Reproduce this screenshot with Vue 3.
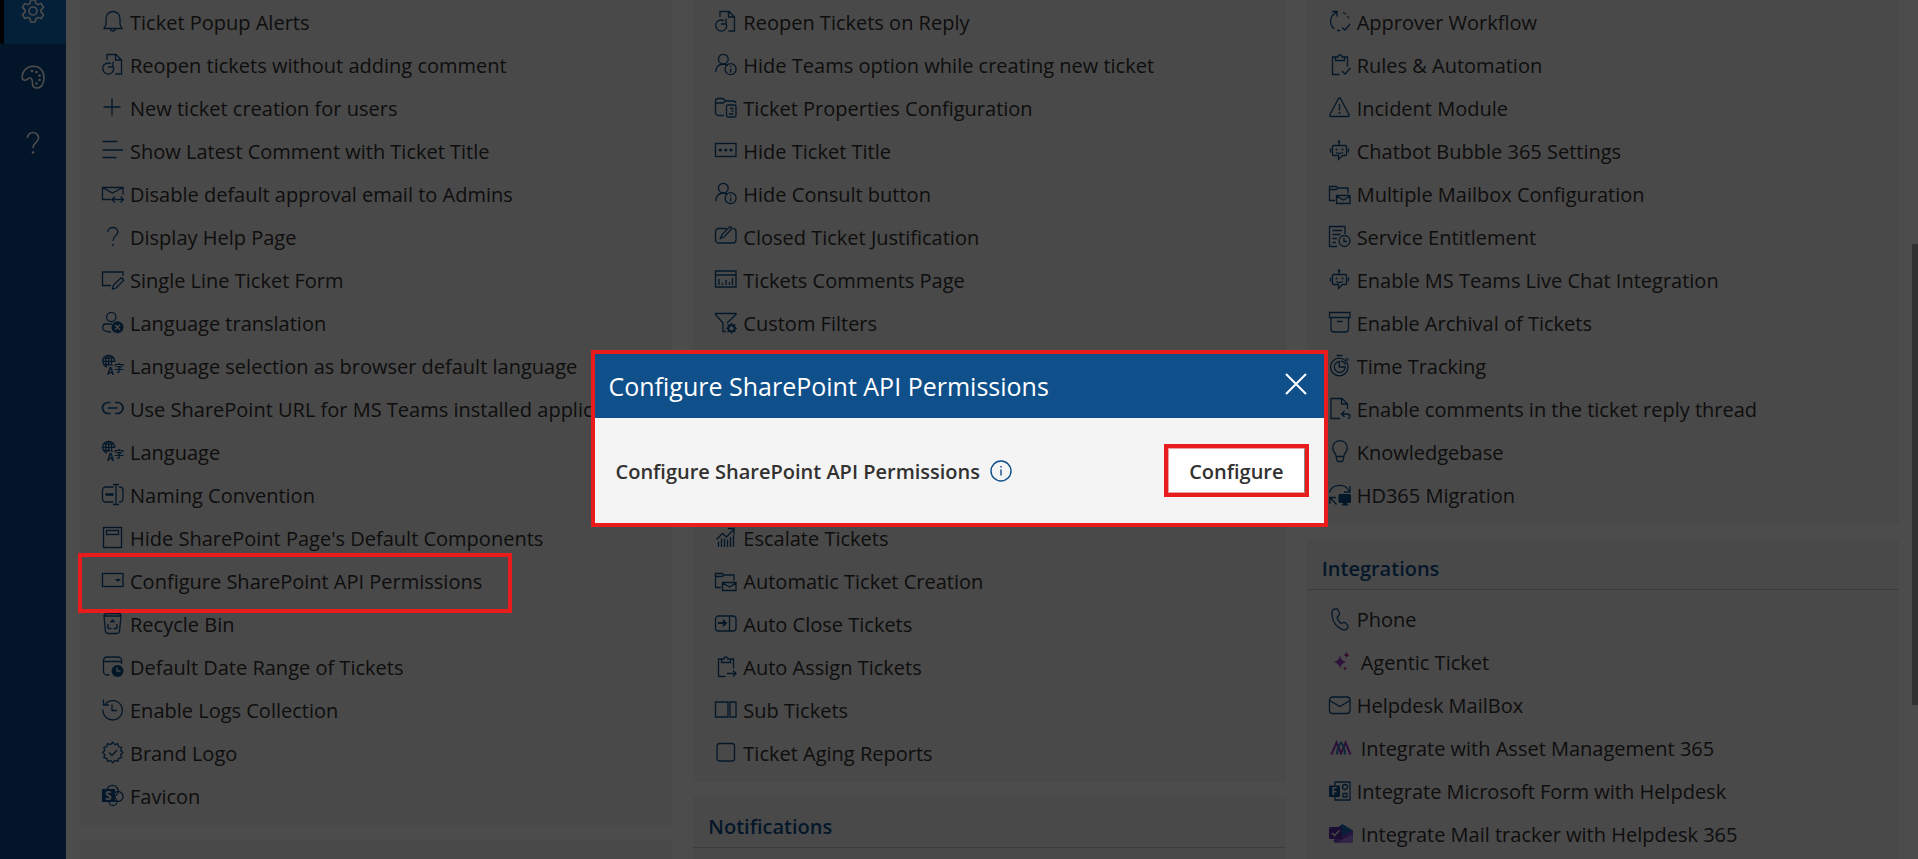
<script setup>
const scallop = (cx, cy, outer, inner, teeth) => {
  const points = []
  for (let i = 0; i < teeth * 2; i++) {
    const r = i % 2 ? inner : outer
    const a = (Math.PI * i) / teeth - Math.PI / 2
    points.push(`${(cx + r * Math.cos(a)).toFixed(1)} ${(cy + r * Math.sin(a)).toFixed(1)}`)
  }
  return `M${points.join('L')}Z`
}

const solid = 'fill="currentColor" stroke="none"'
const knock = 'fill="none" stroke="#f4f4f4"'
const globe = `<circle cx="6.7" cy="7.3" r="6"/><path d="M6.7 1.3v12M.7 7.3h12M2 4.2h9.4M2 10.4h6"/><ellipse cx="6.7" cy="7.3" rx="3" ry="6"/><path fill="#f4f4f4" stroke="none" d="M5 12h6V8h11v14H5z"/><text x="5" y="21" font-size="10" font-weight="700" ${solid}>A</text><text x="12" y="18" font-size="10" font-weight="700" ${solid}>字</text>`
const clipboard = '<path d="M10.500 21.500H3.500V4H7M15 4h3.500v9.500M6.500 4v3.500h9V4H13a2 2 0 0 0-4 0z"/>'
const bot = `<path d="M4.500 6.500h12q1 0 1 1v8q0 1-1 1h-3l-4 4v-4h-5q-1 0-1-1v-8q0-1 1-1zM10 6.500V3M1.500 9.500v4M19.500 9.500v4M7 13.500q3.500 2 7 0"/><circle cx="10" cy="2.500" r="1.300" ${solid}/><circle cx="7.500" cy="10.500" r="1" ${solid}/><circle cx="13.500" cy="10.500" r="1" ${solid}/>`

const icons = {
  bell: '<path d="M2 18.5h18l-2-4V8.500a7 7 0 0 0-14 0v6zM8.500 18.500a2.500 2.500 0 0 0 5 0"/>',
  reopen: '<path d="M5 7V1.500h9l5.500 5.500v14h-6M13.500 1.500V7h6M11.500 14a5.500 5.500 0 1 1-2.500-3.200M11 8.500V14H6"/>',
  plus: '<path d="M10 2.500v17M1.500 11h17"/>',
  lines: '<path d="M.5 2.500h15M.5 11h20.500M.5 18.500h14"/>',
  mailArrows: '<path d="M9 17.500H.5v-12h20.500v7M.5 5.500l10 5.500 10.500-5.500M10.500 17.500h10.500M13 14.500l-3 3 3 3M18.500 14.500l3 3-3 3"/>',
  question: `<path d="M5.800 7a5 4.500 0 0 1 10 0c0 3.500-5 4.500-5 9"/><circle cx="10.800" cy="20" r="1" ${solid}/>`,
  formEdit: '<path d="M9 17.500H.5V4h20.500v4M10.500 21l1-4 7.500-7q2 0 2.500 2.500l-7.500 7.500z"/>',
  personX: `<circle cx="9.300" cy="6" r="4.700"/><path d="M9 21C4 21 .7 19.500.7 16.500q0-3.500 3-3.500H10"/><circle cx="15.500" cy="16.300" r="6" ${solid}/><path ${knock} d="M13 13.800l5 5M18 13.800l-5 5"/>`,
  language: globe,
  link: '<path stroke-width="1.700" d="M8.500 5.500H6a5.500 5.500 0 0 0 0 11h2.500M13 5.500h2.500a5.500 5.500 0 0 1 0 11H13M6 11h9.500"/>',
  naming: '<path d="M11.500 4h-8a3 3 0 0 0-3 3v9a3 3 0 0 0 3 3h8M14 1.500v20M11 1.500h6M11 21.500h6M17 4q4 0 4 3v9q0 3-4 3"/><path stroke-width="2.600" d="M3.500 11.500h8"/>',
  page: '<rect x="1.500" y="1.500" width="18" height="20"/><rect x="4.500" y="4.500" width="12" height="4"/>',
  dropdown: `<rect x=".5" y="4.500" width="20.500" height="13"/><path ${solid} d="M13 10h6l-3 3z"/>`,
  recycle: '<path d="M2 4q0-2.500 2.500-2.500h12Q19 1.500 19 4l-1.500 15.500q-.5 2-2.500 2H6q-2 0-2.500-2L2 4h17"/><path d="M8.500 10.500l2-2.500 2 2.500M6.500 12l-1 3 1.500 1.500h2.500M14.500 12l1 3-1.500 1.500h-2.500"/>',
  dateRange: `<path d="M7.500 20H5a3.500 3.500 0 0 1-3.500-3.500v-11A3.500 3.500 0 0 1 5 2h11a3.500 3.500 0 0 1 3.500 3.500V9M1.500 6.500h18"/><circle cx="15.500" cy="16" r="6" ${solid}/><path ${knock} d="M15 12.500V16h3.500"/>`,
  history: '<path d="M3 6.300a9.700 9.700 0 1 1-2 5.200M1.500 1.500v5.500H7M10 6.500v6h5"/>',
  badge: `<path stroke-linejoin="round" d="${scallop(10.7, 11.5, 10.3, 8.2, 12)}"/><path d="M7 11.500l3 3 5-5.500"/>`,
  sharepoint: `<circle cx="10.500" cy="7" r="5.700"/><circle cx="16" cy="12.500" r="5"/><circle cx="11" cy="17.500" r="4"/><rect x="0" y="5" width="13" height="13" ${solid}/><text x="3" y="16" font-size="12" font-weight="700" fill="#f4f4f4" stroke="none">S</text>`,
  personInfo: `<circle cx="8.300" cy="6.200" r="4.900"/><path d="M.6 19q.4-7.500 7.500-8 3 .2 4.500 1.500"/><circle cx="15.600" cy="16.200" r="5.500"/><path d="M15.600 15.500v4M15.600 12.800v1.300"/>`,
  folderDoc: '<path d="M9 19.500H3.500a3 3 0 0 1-3-3V5q0-2.500 2.500-2.500h5L10.500 5H18q2.500 0 3 2M.5 7H8l2.500-2"/><rect x="11.500" y="9" width="9.500" height="12" rx="1.500"/><path d="M15 12.500h3.500M16.500 15h2M14 18h4.500"/>',
  dots: `<rect x=".5" y="4.500" width="20.500" height="13"/><g ${solid}><circle cx="5.300" cy="11" r="1.600"/><circle cx="10.700" cy="11" r="1.600"/><circle cx="16" cy="11" r="1.600"/></g>`,
  cardEdit: '<path d="M11.500 3.500h-8a3 3 0 0 0-3 3V15a3 3 0 0 0 3 3H18a3 3 0 0 0 3-3V6.500a3 3 0 0 0-2.500-3M5.500 13.500l1.500-4L14.500 2q2-.8 2.500 1.500l-7.500 8z"/>',
  chartPage: '<path d="M.5 3h20.500v16H.5zM.5 7h20.500M4 11v6M7.500 15v2M11 12v5M14.500 14v3M17.500 10v7"/>',
  filterGear: `<path d="M12 12l9-8.500v-1H.5v1L8 12v8.500h3"/><path stroke-width="1.800" d="${scallop(16.5, 17.3, 4.2, 2.8, 8)}"/>`,
  escalate: '<path d="M1.500 13.500l6-6 4 3.500 7.500-8M13 2.500h6v6M3.500 15.500v5.500M6.500 12.500V21M9.500 12.500V21M12.500 13.500V21M15.500 11V21M18.500 9v12"/>',
  folderMail: '<path d="M6 18.500H.5v-14h7L8.500 6h10.500v5.500M.5 7.500h7L9 6"/><path d="M7.500 13.500H21v8H7.500zM7.500 14l7 4L21 14"/>',
  autoClose: '<rect x=".5" y="4" width="20.500" height="15" rx="3"/><path d="M14.500 4v15"/><path stroke-width="1.800" d="M3 11h8M8 8l3 3-3 3"/>',
  assign: `${clipboard}<path d="M12 18.500h9M18 15.500l3 3-3 3"/>`,
  subTickets: '<path d="M.5 4h12.500v15H.5zM15 4h6v15h-6z"/>',
  square: '<rect x="2" y="2.500" width="17.500" height="17.500" rx="2.500"/>',
  workflow: '<path d="M5.500 19A9.500 9.500 0 0 1 3 6L7.500 2M3 1.500h5v5M14 2.500l3 1.500M18.500 6l1.500 2.500M8 20.500h3M13 17.500l3 2.500 5-6"/>',
  rules: `${clipboard}<path d="M13 18l3 3 5.500-6"/>`,
  incident: `<path stroke-linejoin="round" d="M9.500 2.500q1-1.500 2 0L20 18.500q.5 2-1 2H2q-1.500 0-1-2zM10.500 8v6.500"/><circle cx="10.500" cy="17" r="1" ${solid}/>`,
  bot,
  entitlement: '<path d="M8 21.500H.5v-20H16V9M3.500 5.500h9.500M3.500 9.500h8M3.500 13.500H8M3.500 17.500H7"/><circle cx="15.500" cy="16" r="5.500"/><path d="M15 13v3.500h3"/>',
  archive: '<path d="M.5 1.500h20.500v5H.5zM2 6.500V18a3 3 0 0 0 3 3h11.500a3 3 0 0 0 3-3V6.500M8 10.500h5.500"/>',
  stopwatch: '<circle cx="10.300" cy="13" r="8.800"/><path d="M10.300 7.500a5.500 5.500 0 1 0 6 5.500h-6zM12 7q4 1 4.500 4M7.500 1.500h6M17 4l2.500 2.500"/>',
  pageReply: '<path d="M11 21.500H2v-20h11l5.500 5.500v5M12.500 1.500V7h6M15.500 14l-3 3 3 3M12.500 17h6q2.500.5 2.500 2.500 0 1.500-2 2"/>',
  bulb: '<path d="M7 16q0-1.500-2-4a7.300 7.300 0 1 1 12 0q-2 2.500-2 4l-1 4.500q-.3 1-1.500 1h-3q-1.200 0-1.500-1zM7 16.500h8"/>',
  migration: `<path d="M.5 9.500a10.500 9.500 0 0 1 20-1M21 3v6h-6M.8 21v-6.500H7M1 14.500l6.500 7"/><path ${solid} d="M11 11h9.500q1.500 0 1.500 1.500v6q0 1.500-1.500 1.500H18v1.500h1.500v1h-7v-1H14V20h-3q-1.500 0-1.500-1.500v-6Q9.500 11 11 11z"/>`,
  phone: '<path stroke-linejoin="round" d="M3 5q.3-3 3.500-3.200 2-.3 2.700 1.500l1.300 3q.3 1.500-.8 2.500L8 10.500q1 3.500 4 6l2.500-1q1.500-.3 2.300.7l2 2.500q.8 1.500-.5 2.700-2.300 2.200-5.500 1Q4 18 3 8.500z"/>',
  mail: '<rect x=".5" y="4" width="20.500" height="16.500" rx="3"/><path d="M.5 7.500l10.300 6L21 7.500"/>',
  forms: `<path d="M6 6.500V3h15v18H6v-3.500"/><circle cx="16" cy="8" r="2.500"/><path d="M14 14.500h4v3.500h-4z"/><rect x="0" y="6.500" width="11" height="11.500" rx="1" ${solid}/><text x="2.500" y="16" font-size="10" font-weight="700" fill="#f4f4f4" stroke="none">F</text>`,
  sparkle: '<g stroke="none"><path fill="#9b3fc8" d="M11 5.500q1 5.500 6.500 6.500-5.500 1-6.500 6.500-1-5.500-6.500-6.500 5.500-1 6.500-6.500z"/><path fill="#b5229b" d="M17.500 2q.5 2.500 3 3-2.500.5-3 3-.5-2.500-3-3 2.500-.5 3-3zM16 16.500q.3 1.700 2 2-1.700.3-2 2-.3-1.700-2-2 1.700-.3 2-2z"/></g>',
  asset: '<g stroke-width="2"><path stroke="#a02fc4" d="M2.500 18.500l5-12 5 12M11.500 18.500l5-12 5 12"/><path stroke="#2b7fc4" d="M8 18.500q0-7 4-12 4 5 4 12"/></g>',
  tracker: '<g stroke="none"><path fill="#1c6fc0" d="M4 8.500L13.500 2 24 8.500v6H4z"/><path fill="#8145d8" d="M24 8.500V18q0 3-3 3H7.500q-3 0-3-3z"/><path fill="#a07ce8" d="M8 20.500L24 12v6q0 3-3 3H8z"/><rect x="0" y="5" width="13" height="12" rx="1.500" fill="#5b2fa8"/></g><path stroke="#ffffff" d="M3 11l2.500 2.500 5-5"/>',
}

const columns = [
  [
    {
      groups: [[
        ['bell', 'Ticket Popup Alerts'],
        ['reopen', 'Reopen tickets without adding comment'],
        ['plus', 'New ticket creation for users'],
        ['lines', 'Show Latest Comment with Ticket Title'],
        ['mailArrows', 'Disable default approval email to Admins'],
        ['question', 'Display Help Page'],
        ['formEdit', 'Single Line Ticket Form'],
        ['personX', 'Language translation'],
        ['language', 'Language selection as browser default language'],
        ['link', 'Use SharePoint URL for MS Teams installed application'],
        ['language', 'Language'],
        ['naming', 'Naming Convention'],
        ['page', "Hide SharePoint Page's Default Components"],
        ['dropdown', 'Configure SharePoint API Permissions', 'marked'],
        ['recycle', 'Recycle Bin'],
        ['dateRange', 'Default Date Range of Tickets'],
        ['history', 'Enable Logs Collection'],
        ['badge', 'Brand Logo'],
        ['sharepoint', 'Favicon'],
      ]],
    },
    { groups: [] },
  ],
  [
    {
      groups: [
        [
          ['reopen', 'Reopen Tickets on Reply'],
          ['personInfo', 'Hide Teams option while creating new ticket'],
          ['folderDoc', 'Ticket Properties Configuration'],
          ['dots', 'Hide Ticket Title'],
          ['personInfo', 'Hide Consult button'],
          ['cardEdit', 'Closed Ticket Justification'],
          ['chartPage', 'Tickets Comments Page'],
          ['filterGear', 'Custom Filters'],
        ],
        [
          ['escalate', 'Escalate Tickets'],
          ['folderMail', 'Automatic Ticket Creation'],
          ['autoClose', 'Auto Close Tickets'],
          ['assign', 'Auto Assign Tickets'],
          ['subTickets', 'Sub Tickets'],
          ['square', 'Ticket Aging Reports'],
        ],
      ],
    },
    { title: 'Notifications', groups: [] },
  ],
  [
    {
      groups: [[
        ['workflow', 'Approver Workflow'],
        ['rules', 'Rules & Automation'],
        ['incident', 'Incident Module'],
        ['bot', 'Chatbot Bubble 365 Settings'],
        ['folderMail', 'Multiple Mailbox Configuration'],
        ['entitlement', 'Service Entitlement'],
        ['bot', 'Enable MS Teams Live Chat Integration'],
        ['archive', 'Enable Archival of Tickets'],
        ['stopwatch', 'Time Tracking'],
        ['pageReply', 'Enable comments in the ticket reply thread'],
        ['bulb', 'Knowledgebase'],
        ['migration', 'HD365 Migration'],
      ]],
    },
    {
      title: 'Integrations',
      groups: [[
        ['phone', 'Phone'],
        ['sparkle', 'Agentic Ticket', 'wide'],
        ['mail', 'Helpdesk MailBox'],
        ['asset', 'Integrate with Asset Management 365', 'wide'],
        ['forms', 'Integrate Microsoft Form with Helpdesk'],
        ['tracker', 'Integrate Mail tracker with Helpdesk 365', 'wide'],
      ]],
    },
  ],
]
</script>

<template>
  <div class="page">
    <nav class="rail" aria-label="Main">
      <a href="#settings" class="rail-item current" aria-label="Settings">
        <svg viewBox="0 0 24 24">
          <path stroke-linejoin="round" d="M9.800 1h4.400l.8 3.500 2 1.100 3.300-1 2.200 3.800-2.500 2.500v2.200l2.500 2.500-2.200 3.800-3.300-1-2 1.100-.8 3.500H9.800L9 19.500l-2-1.100-3.300 1-2.200-3.800L4 13.100v-2.200L1.500 8.400l2.200-3.800 3.300 1 2-1.100z" />
          <circle cx="12" cy="12" r="4" />
        </svg>
      </a>
      <a href="#theme" class="rail-item" aria-label="Theme">
        <svg viewBox="0 0 24 24">
          <path d="M1.200 12.500C1.200 6 6 1.200 12.500 1.200S23 6 23 12.500 20 23 16 23c-3 0-4.500-1.500-4.500-4.500 0-3 0-5-2-5.500-2.500-.5-4 3-6.500 2-1.500-.5-1.800-1.500-1.800-2.500z" />
          <g class="dots"><circle cx="11" cy="6" r="1.300" /><circle cx="15.500" cy="7" r="1.300" /><circle cx="18.500" cy="10.500" r="1.300" /><circle cx="18.500" cy="15" r="1.300" /><circle cx="15.500" cy="18.500" r="1.300" /></g>
        </svg>
      </a>
      <a href="#help" class="rail-item" aria-label="Help">
        <svg viewBox="0 0 24 24">
          <path d="M6.500 7a5.500 5.500 0 0 1 11 0c0 4-5.500 5-5.500 10" />
          <g class="dots"><circle cx="12" cy="21.500" r="1.300" /></g>
        </svg>
      </a>
    </nav>

    <main class="columns">
      <div v-for="(panels, c) in columns" :key="c" class="column">
        <section v-for="(panel, p) in panels" :key="p" class="panel" :class="{ titled: panel.title }">
          <h2 v-if="panel.title">{{ panel.title }}</h2>
          <ul v-for="(group, g) in panel.groups" :key="g">
            <li v-for="[icon, label, kind] in group" :key="label" :class="kind">
              <a :href="'#' + icon">
                <svg class="icon" :viewBox="kind === 'wide' ? '0 0 26 22' : '0 0 22 22'" aria-hidden="true" v-html="icons[icon]"></svg>
                <span>{{ label }}</span>
              </a>
            </li>
          </ul>
        </section>
      </div>
    </main>
    <div class="scroll-thumb"></div>

    <div class="overlay">
      <div class="dialog" role="dialog" aria-labelledby="dialog-title">
        <header>
          <h1 id="dialog-title">Configure SharePoint API Permissions</h1>
          <button class="close" type="button" aria-label="Close">
            <svg viewBox="0 0 22 22"><path d="M1 1l20 20M21 1L1 21" /></svg>
          </button>
        </header>
        <div class="body">
          <span id="permission-label" class="label">Configure SharePoint API Permissions</span>
          <svg class="info" viewBox="0 0 22 22" aria-hidden="true">
            <circle cx="11" cy="11" r="10" /><path d="M11 9.500v6M11 6v1.500" />
          </svg>
          <div class="action">
            <button type="button" aria-describedby="permission-label">Configure</button>
          </div>
        </div>
      </div>
    </div>
  </div>
</template>

<style>
body {
  margin: 0;
  overflow: hidden;
}
</style>

<style scoped>
.page {
  position: relative;
  display: flex;
  height: 100vh;
  overflow: hidden;
  background: #ffffff;
  color: #323130;
  font-family: "Segoe UI", "Open Sans", "Noto Sans", "Noto Sans CJK SC", sans-serif;
  font-size: 20px;
}
.rail {
  flex: 0 0 66px;
  background: #0b4a8a;
  overflow: hidden;
}
.rail-item {
  box-sizing: border-box;
  display: flex;
  align-items: center;
  justify-content: center;
  height: 66px;
  color: #ffffff;
}
.rail-item:first-child {
  margin-top: -22px;
}
.rail-item.current {
  border-left: 4px solid #000000;
  padding-right: 4px;
  border-radius: 3px;
  background: #0f6cbd;
}
.rail-item svg {
  width: 24px;
  height: 24px;
  fill: none;
  stroke: currentColor;
  stroke-width: 1.6;
}
.rail-item .dots {
  fill: currentColor;
  stroke: none;
}
.columns {
  flex: 1;
  display: flex;
  gap: 21px;
  padding: 0 19px 0 14px;
}
.column {
  flex: 1 1 0;
  min-width: 0;
  display: flex;
  flex-direction: column;
  gap: 15px;
}
.panel {
  flex-shrink: 0;
  padding: 1px 0 7px;
  background: #f4f4f4;
}
.panel:last-child {
  flex: 1 0 auto;
}
.panel.titled {
  padding-top: 0;
}
h2 {
  margin: 0 0 8px;
  padding: 10px 15px 0;
  border-bottom: 1px solid #c8c8c8;
  color: #0f4f8a;
  font-size: 20px;
  font-weight: 600;
  line-height: 40px;
}
ul {
  margin: 0;
  padding: 0;
  list-style: none;
}
ul + ul {
  margin-top: 172px;
}
li {
  position: relative;
}
li a {
  display: flex;
  align-items: center;
  gap: 6px;
  height: 43px;
  padding-left: 22px;
  color: inherit;
  text-decoration: none;
  white-space: nowrap;
}
.icon {
  flex: none;
  width: 22px;
  height: 22px;
  margin-bottom: 4px;
  color: #0f4f8a;
  fill: none;
  stroke: currentColor;
  stroke-width: 1.3;
  overflow: visible;
}
.wide .icon {
  width: 26px;
}
.marked::after {
  content: "";
  position: absolute;
  z-index: 20;
  top: -7px;
  bottom: -10px;
  left: -2px;
  box-sizing: border-box;
  width: 434px;
  border: 4px solid #e81c1c;
}
.scroll-thumb {
  position: absolute;
  top: 244px;
  right: 0;
  width: 6px;
  height: 461px;
  background: #a8a8a8;
}
.overlay {
  position: absolute;
  z-index: 10;
  inset: 0;
  display: flex;
  align-items: center;
  justify-content: center;
  padding-top: 18px;
  background: rgba(0, 0, 0, 0.7);
}
.dialog {
  box-sizing: border-box;
  width: 737px;
  max-width: 100%;
  border: 4px solid #e81c1c;
  background: #f4f4f4;
}
header {
  display: flex;
  align-items: center;
  justify-content: space-between;
  height: 64px;
  padding: 0 14px;
  background: #0f4f8a;
  color: #ffffff;
}
h1 {
  margin: 0;
  font-size: 25px;
  font-weight: 400;
}
.close {
  padding: 0 3px 4px;
  border: 0;
  background: none;
  color: inherit;
}
.close svg {
  display: block;
  width: 22px;
  height: 22px;
  fill: none;
  stroke: currentColor;
  stroke-width: 2;
}
.body {
  display: flex;
  align-items: center;
  gap: 10px;
  height: 105px;
  padding: 0 15px 0 21px;
}
.label {
  padding-top: 2px;
  font-weight: 600;
}
.info {
  width: 22px;
  height: 22px;
  fill: none;
  stroke: #0f4f8a;
  stroke-width: 1.4;
}
.action {
  margin-left: auto;
  border: 4px solid #e81c1c;
  background: #ffffff;
}
.action button {
  display: block;
  height: 45px;
  padding: 2px 20px 0;
  border: 1px solid #e9a0a0;
  border-right-color: #8a8886;
  background: #ffffff;
  color: inherit;
  font: inherit;
  font-weight: 600;
}
</style>
